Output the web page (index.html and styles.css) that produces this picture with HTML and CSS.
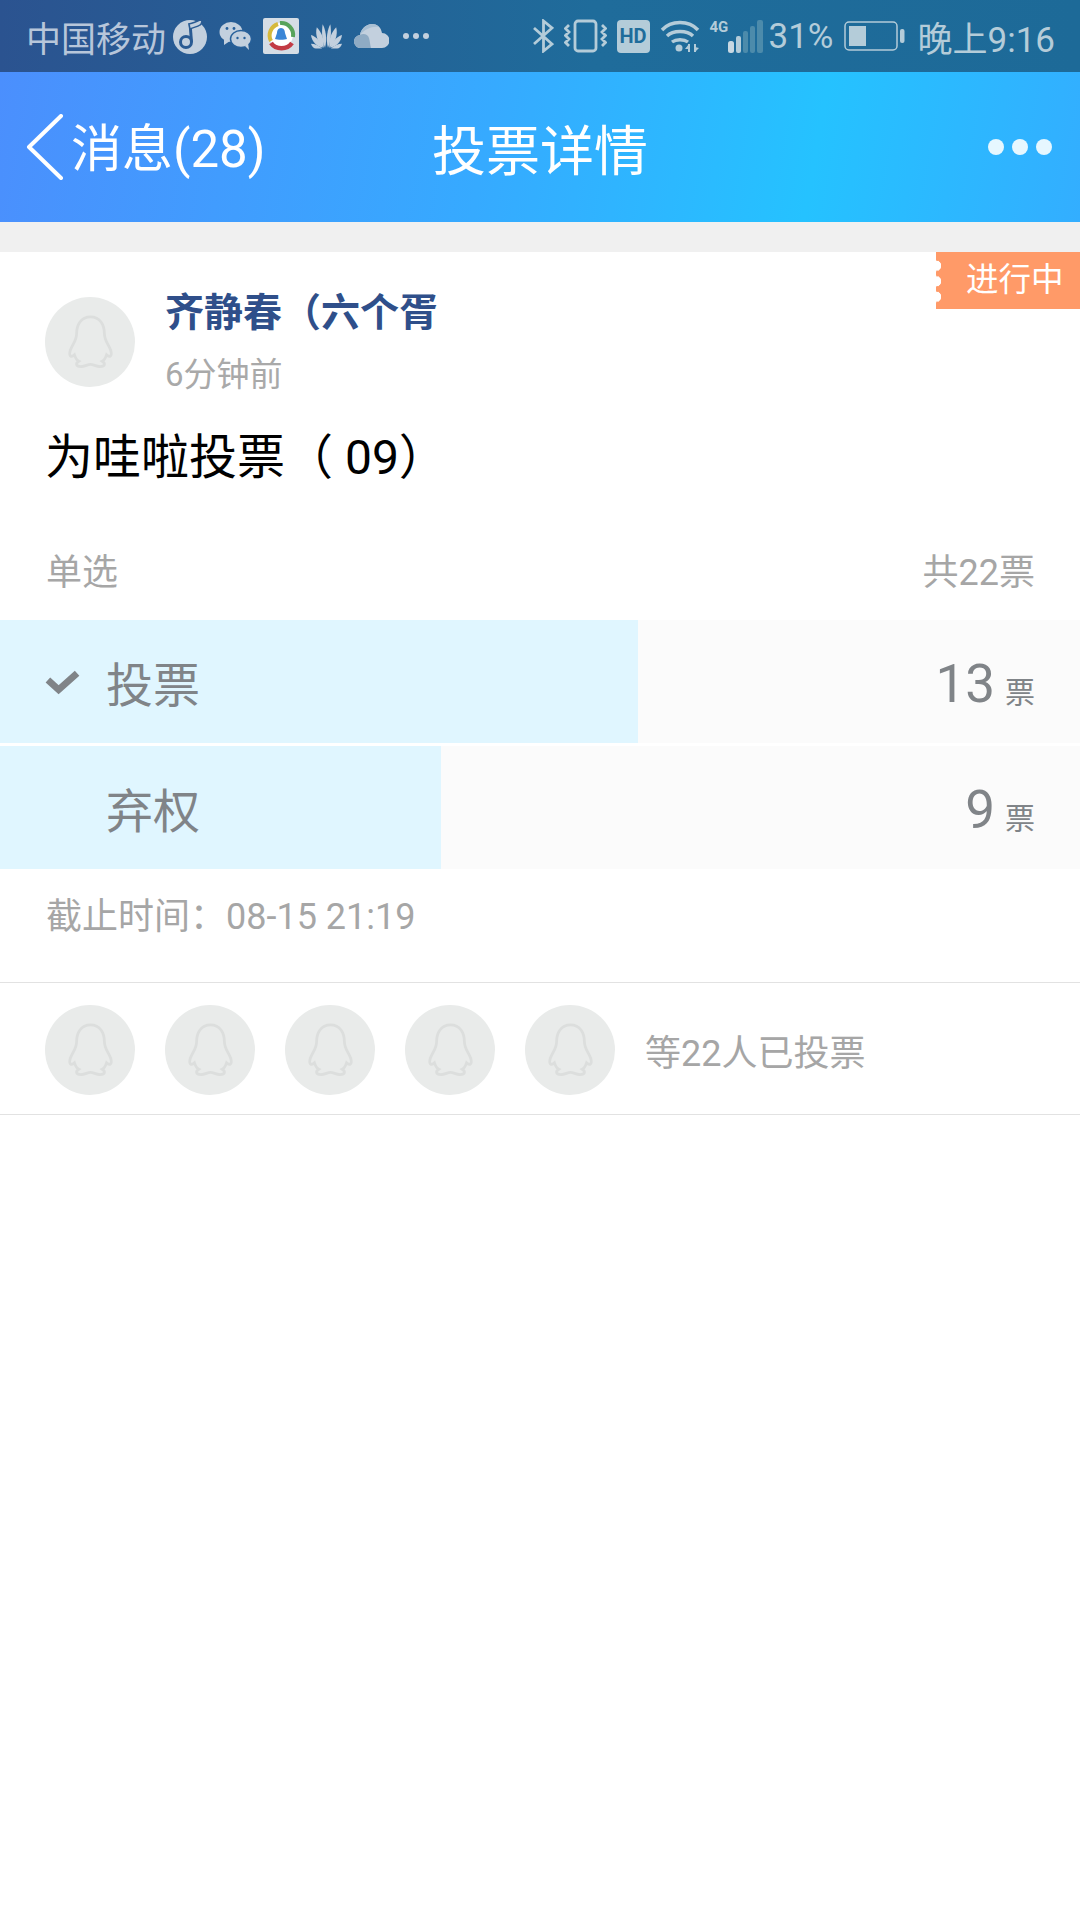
FILE: index.html
```html
<!DOCTYPE html>
<html lang="zh-CN">
<head>
    <meta charset="UTF-8">
    <meta name="viewport" content="width=device-width, initial-scale=1.0">
    <title>投票详情</title>
    <link rel="stylesheet" href="styles.css">
</head>
<body>
    <svg class="defs" width="0" height="0">
        <symbol id="penguin" viewBox="0 0 44 50">
            <path d="M22 1.500C13 1.500 9 9 9 17c0 7-4 10-6 16-1.500 5 1 7 4 4 1 3 2 5 4 6-3 2-3 5 2 5 4 0 6-2 9-2s5 2 9 2c5 0 5-3 2-5 2-1 3-3 4-6 3 3 5.500 1 4-4-2-6-6-9-6-16 0-8-4-15.500-13-15.500z" fill="none" stroke="#dcdedd" stroke-width="2.600"/>
        </symbol>
    </svg>

    <div class="statusbar">
        <div class="status-left">
            <span class="carrier">中国移动</span>
            <svg class="ic" width="35" height="36" viewBox="0 0 35 36">
                <circle cx="17" cy="19" r="17" fill="#c3d0de"/>
                <path d="M17 5l1.500 19" fill="none" stroke="#2a5b93" stroke-width="3"/>
                <circle cx="13" cy="24" r="5.500" fill="#c3d0de" stroke="#2a5b93" stroke-width="3"/>
                <path d="M16 6c5-1 9-3 13-5 0 3 0 5-2 6-3 2-6 2-10 4z" fill="#c3d0de" stroke="#2a5b93" stroke-width="1.500"/>
            </svg>
            <svg class="ic" width="33" height="30" viewBox="0 0 33 30">
                <ellipse cx="12" cy="11" rx="11.500" ry="10" fill="#c3d0de"/>
                <path d="M5 18l0 6 6-4z" fill="#c3d0de"/>
                <ellipse cx="22" cy="18" rx="10.500" ry="8.500" fill="#c3d0de" stroke="#27609a" stroke-width="1.500"/>
                <path d="M26 25l4 4-1-7z" fill="#c3d0de"/>
                <circle cx="8" cy="7.500" r="1.400" fill="#27609a"/><circle cx="15" cy="7.500" r="1.400" fill="#27609a"/>
                <circle cx="18.500" cy="17" r="1.200" fill="#27609a"/><circle cx="25.500" cy="17" r="1.200" fill="#27609a"/>
            </svg>
            <svg class="ic" width="36" height="36" viewBox="0 0 36 36">
                <rect width="36" height="36" rx="2" fill="#d5dde5"/>
                <circle cx="18" cy="17" r="12" fill="#fff"/>
                <path d="M8 23A12 12 0 0 1 15 6" fill="none" stroke="#d6b93b" stroke-width="4"/>
                <path d="M17 5A12 12 0 0 1 30 19" fill="none" stroke="#57a35a" stroke-width="4"/>
                <path d="M8 25c5 7 16 7 21 0" fill="none" stroke="#c23a44" stroke-width="4.500"/>
                <path d="M18 10c-3 0-4 3-4 5l-2 6c2 1 10 1 12 0l-2-6c0-2-1-5-4-5z" fill="#3b86d6"/>
            </svg>
            <svg class="ic" width="33" height="26" viewBox="0 0 34 26" fill="#c3d0de">
                <path d="M15.500 25C12 18 12 8 13 1c3 5 5 15 2.500 24z"/>
                <path d="M18.500 25C22 18 22 8 21 1c-3 5-5 15-2.500 24z"/>
                <path d="M14 25C8 20 5 12 7 4c5 5 8 13 7 21z"/>
                <path d="M20 25c6-5 9-13 7-21-5 5-8 13-7 21z"/>
                <path d="M13 25C7 24 2 19 1 12c6 2 10 7 12 13z"/>
                <path d="M21 25c6-1 11-6 12-13-6 2-10 7-12 13z"/>
                <path d="M12.500 26H6c-2 0-4-2-5-5 4 0 8 2 11.500 5z"/>
                <path d="M21.500 26H28c2 0 4-2 5-5-4 0-8 2-11.500 5z"/>
            </svg>
            <svg class="ic" width="35" height="26" viewBox="0 0 35 26">
                <path d="M7 25a6.500 6.500 0 0 1-1-13c1-6 6-11 12-11 5 0 9 3 10 9a7.500 7.500 0 0 1 0 15z" fill="#c3d0de"/>
                <path d="M7 25a6.500 6.500 0 0 1-1-13c3-2 8-1 9 3 1 3 1 7 2 10z" fill="#8fabc4"/>
                <path d="M6 12c1-6 6-11 12-11 3 0 5 1 7 3-7-1-14 2-19 8z" fill="#a9bfd3"/>
            </svg>
            <span class="more-dots"><i></i><i></i><i></i></span>
        </div>
        <div class="status-right">
            <svg class="ic" width="21" height="34" viewBox="0 0 21 34" fill="none" stroke="#b4ccd9" stroke-width="2.800">
                <path d="M1 9l18 16-8.500 7V2L19 9 1 25"/>
            </svg>
            <svg class="ic" width="43" height="34" viewBox="0 0 43 34" fill="none" stroke="#b4ccd9" stroke-width="2.800">
                <rect x="11" y="2" width="21" height="30" rx="3"/>
                <path d="M5 6L1.500 9.500 5 13l-3.500 3.500L5 20l-3.500 3.500L5 27M38 6l3.500 3.500L38 13l3.500 3.500L38 20l3.500 3.500L38 27"/>
            </svg>
            <span class="hd">HD</span>
            <svg class="ic" width="40" height="34" viewBox="0 0 40 34" fill="none" stroke="#b4ccd9" stroke-width="3.400">
                <path d="M2 11c9-10 27-10 36 0M7 17c6-6 20-6 26 0M12 23c4-3 12-3 16 0"/>
                <circle cx="19" cy="29" r="3.500" fill="#b4ccd9" stroke="none"/>
                <path d="M29 33v-8M35 25v8" stroke-width="2"/>
                <path d="M25 30l4-5v5zM35 33l4-4-4-1z" fill="#b4ccd9" stroke="none"/>
            </svg>
            <span class="signal">
                <em>4G</em>
                <svg class="ic" width="36" height="34" viewBox="0 0 36 34">
                    <rect x="0" y="22" width="6" height="12" rx="2.500" fill="#c8d8e2"/>
                    <rect x="8" y="17" width="5" height="17" rx="2" fill="#b4ccd9"/>
                    <rect x="15" y="12" width="5" height="22" rx="2" fill="#4c8bab"/>
                    <rect x="22" y="7" width="5" height="27" rx="2" fill="#4c8bab"/>
                    <rect x="29" y="1" width="6" height="33" rx="2" fill="#4c8bab"/>
                </svg>
            </span>
            <span class="pct">31%</span>
            <svg class="ic" width="61" height="30" viewBox="0 0 61 30">
                <rect x="1" y="1" width="52" height="28" rx="4" fill="none" stroke="#b4ccd9" stroke-width="1.500"/>
                <rect x="5" y="5" width="17" height="20" fill="#b4ccd9"/>
                <rect x="56" y="8" width="4.500" height="14" rx="2" fill="#b4ccd9"/>
            </svg>
            <span class="clock">晚上9:16</span>
        </div>
    </div>

    <div class="navbar">
        <div class="nav-back">
            <svg width="40" height="66" viewBox="0 0 40 66" fill="none" stroke="#fff" stroke-width="4" stroke-linecap="round" stroke-linejoin="round">
                <path d="M35 2L3 33l32 31"/>
            </svg>
            <span class="nav-back-text">消息(28)</span>
        </div>
        <h1 class="nav-title">投票详情</h1>
        <div class="nav-more"><i></i><i></i><i></i></div>
    </div>

    <div class="gap"></div>

    <div class="vote">
        <div class="badge">进行中</div>

        <div class="author">
            <div class="avatar"><svg width="47" height="54"><use href="#penguin"/></svg></div>
            <div class="author-text">
                <div class="author-name">齐静春（六个胥</div>
                <div class="author-time">6分钟前</div>
            </div>
        </div>

        <h2 class="vote-title">为哇啦投票（ 09）</h2>

        <div class="vote-meta">
            <span>单选</span>
            <span>共22票</span>
        </div>

        <div class="option">
            <div class="option-fill" style="width: 59.100%"></div>
            <div class="option-check">
                <svg width="35" height="26" viewBox="0 0 36 26" fill="none" stroke="#808488" stroke-width="7">
                    <path d="M3 11l11 10L33 4"/>
                </svg>
            </div>
            <span class="option-name">投票</span>
            <span class="option-count">13</span>
            <span class="option-unit">票</span>
        </div>
        <div class="option">
            <div class="option-fill" style="width: 40.800%"></div>
            <div class="option-check"></div>
            <span class="option-name">弃权</span>
            <span class="option-count">9</span>
            <span class="option-unit">票</span>
        </div>

        <div class="deadline">截止时间：08-15 21:19</div>

        <div class="voters">
            <div class="avatar"><svg width="47" height="54"><use href="#penguin"/></svg></div>
            <div class="avatar"><svg width="47" height="54"><use href="#penguin"/></svg></div>
            <div class="avatar"><svg width="47" height="54"><use href="#penguin"/></svg></div>
            <div class="avatar"><svg width="47" height="54"><use href="#penguin"/></svg></div>
            <div class="avatar"><svg width="47" height="54"><use href="#penguin"/></svg></div>
            <span class="voters-text">等22人已投票</span>
        </div>
    </div>
</body>
</html>
```

FILE: styles.css
```css
* {
    box-sizing: border-box;
}

body {
    margin: 0;
    width: 1080px;
    height: 1920px;
    overflow: hidden;
    background-color: #fff;
    font-family: Roboto, "Noto Sans CJK SC", sans-serif;
}

.defs {
    position: absolute;
}

.ic {
    display: block;
    flex: none;
}

/* Status bar */
.statusbar {
    height: 72px;
    display: flex;
    align-items: center;
    justify-content: space-between;
    padding: 0 25px 0 26px;
    background: linear-gradient(90deg, #2b5390 0%, #1f6c9b 55%, #1d6a98 100%);
    font-size: 35px;
}

.status-left, .status-right {
    display: flex;
    align-items: center;
}

.carrier {
    color: #b7c6da;
    margin-right: 7px;
}

.status-left .ic {
    margin-right: 11px;
}

.more-dots {
    display: flex;
    gap: 4px;
    margin-left: 3px;
}

.more-dots i {
    width: 6px;
    height: 6px;
    border-radius: 50%;
    background-color: #c3d0de;
}

.status-right {
    color: #b4ccd9;
    gap: 10px;
}

.hd {
    width: 33px;
    height: 33px;
    border-radius: 4px;
    background-color: #b4ccd9;
    color: #1f6c9b;
    font-size: 20px;
    font-weight: 700;
    line-height: 33px;
    text-align: center;
}

.signal {
    display: flex;
    align-items: flex-start;
    width: 54px;
    height: 34px;
}

.signal em {
    width: 18px;
    flex: none;
    font-style: normal;
    font-size: 15px;
    font-weight: 700;
    line-height: 16px;
}

.pct {
    margin-left: -5px;
}

.clock {
    margin-left: 3px;
}

/* Nav bar */
.navbar {
    position: relative;
    height: 150px;
    display: flex;
    align-items: center;
    justify-content: space-between;
    padding: 0 28px 0 26px;
    background: linear-gradient(100deg, #4b8ffd 0%, #36aaff 45%, #25c2ff 75%, #33aeff 100%);
    color: #fff;
}

.nav-back {
    display: flex;
    align-items: center;
    font-size: 51px;
    gap: 5px;
}

.nav-back-text {
    margin-bottom: 4px;
}

.nav-title {
    position: absolute;
    left: 0;
    right: 0;
    margin: 0;
    text-align: center;
    font-size: 54px;
    font-weight: 400;
}

.nav-more {
    display: flex;
    gap: 8px;
}

.nav-more i {
    width: 16px;
    height: 16px;
    border-radius: 50%;
    background-color: #e6f7ff;
}

.gap {
    height: 30px;
    background-color: #f0f0f0;
}

/* Vote card */
.vote {
    position: relative;
}

.badge {
    position: absolute;
    top: 0;
    right: 0;
    width: 144px;
    height: 57px;
    padding-left: 30px;
    background-color: #ff9a68;
    color: #fff;
    font-size: 32.500px;
    line-height: 56px;
}

.badge::before {
    content: "";
    position: absolute;
    left: 0;
    top: 6px;
    width: 6px;
    height: 46.500px;
    background: radial-gradient(circle at 0 50%, #fff 5px, transparent 5.500px) 0 0 / 6px 15.500px repeat-y;
}

.author {
    display: flex;
    align-items: flex-start;
    height: 135px;
    padding: 45px 0 0 45px;
}

.avatar {
    width: 90px;
    height: 90px;
    flex: none;
    display: flex;
    align-items: center;
    justify-content: center;
    border-radius: 50%;
    background-color: #e9ebea;
}

.author-text {
    margin-left: 30px;
    margin-top: -9px;
}

.author-name {
    color: #2f4f8a;
    font-size: 39px;
    font-weight: 700;
    line-height: 50px;
}

.author-time {
    margin-top: 17px;
    color: #a9a9a9;
    font-size: 33px;
    line-height: 40px;
}

.vote-title {
    margin: 38px 0 0 45px;
    color: #000;
    font-size: 48px;
    font-weight: 400;
    line-height: 66px;
}

.vote-meta {
    display: flex;
    justify-content: space-between;
    padding: 0 45px 0 46px;
    margin-top: 59px;
    color: #a6a6a6;
    font-size: 36px;
    line-height: 46px;
}

.option {
    position: relative;
    height: 123px;
    display: flex;
    align-items: center;
    margin-bottom: 3px;
    padding: 0 45px;
    background-color: #fbfbfb;
    color: #808488;
}

.vote-meta + .option {
    margin-top: 24px;
}

.option-fill {
    position: absolute;
    left: 0;
    top: 0;
    bottom: 0;
    background-color: #e0f6ff;
}

.option-check {
    position: relative;
    width: 61px;
    flex: none;
}

.option-check svg {
    display: block;
}

.option-name {
    position: relative;
    flex: 1;
    font-size: 47px;
}

.option-count {
    position: relative;
    margin-top: 4px;
    font-size: 53px;
}

.option-unit {
    position: relative;
    margin-left: 10px;
    margin-top: 16px;
    font-size: 30px;
}

.deadline {
    height: 111px;
    padding: 23px 46px 0;
    color: #a6a6a6;
    font-size: 36px;
    line-height: 44px;
    border-bottom: 1px solid #e2e2e2;
}

.voters {
    display: flex;
    align-items: center;
    gap: 30px;
    height: 132px;
    padding: 3px 45px 0;
    border-bottom: 1px solid #e2e2e2;
}

.voters-text {
    color: #a6a6a6;
    font-size: 36px;
}
```
